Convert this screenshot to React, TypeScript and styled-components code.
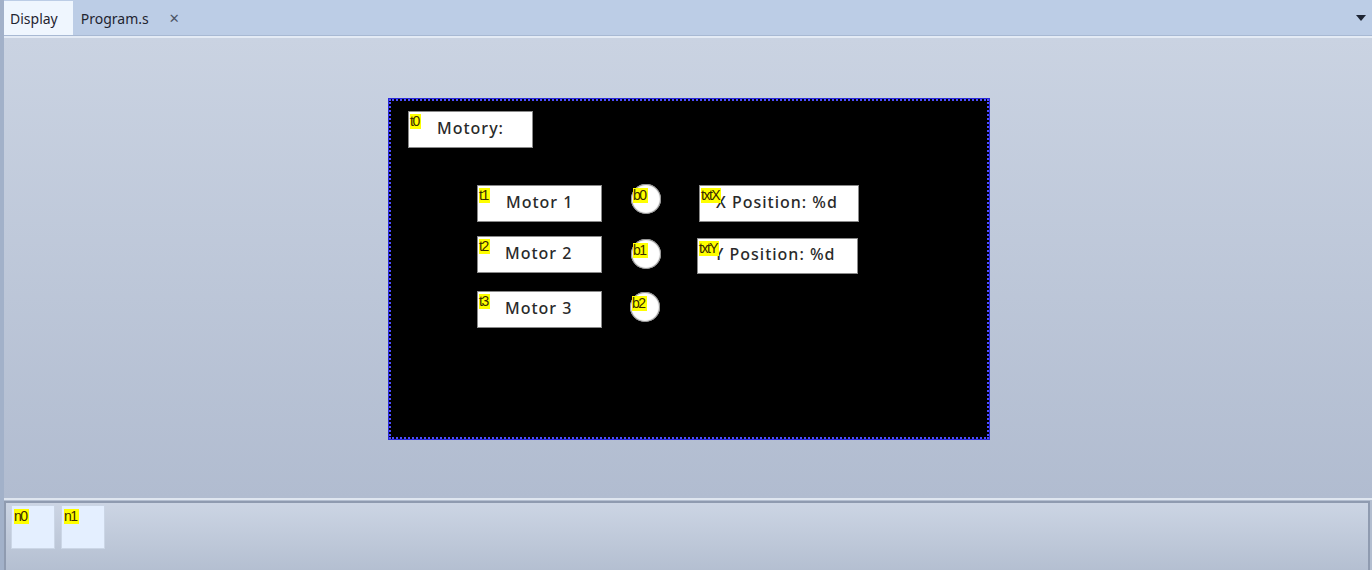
import React from "react";
import styled, { createGlobalStyle } from "styled-components";

const Global = createGlobalStyle`
  html, body { margin: 0; padding: 0; }
  body { width: 1372px; height: 570px; overflow: hidden; font-family: "Noto Sans", "DejaVu Sans", sans-serif; }
  #root { width: 1372px; height: 570px; }
`;

const Shell = styled.div`
  width: 1372px;
  height: 570px;
  display: flex;
  flex-direction: column;
  background: #c3cddd;
  border-left: 4px solid #a2b1c9;
  box-sizing: border-box;
`;

const TabBar = styled.div`
  height: 35px;
  flex: none;
  display: flex;
  align-items: flex-end;
  background: #bccde6;
  border-bottom: 1px solid #a8b9d3;
  position: relative;
`;

const Tab = styled.div<{ $active?: boolean }>`
  height: ${(p) => (p.$active ? "34px" : "33px")};
  display: flex;
  align-items: center;
  padding: ${(p) => (p.$active ? "0 15px 0 6px" : "0 8px")};
  box-sizing: border-box;
  font-family: "Noto Sans", sans-serif;
  font-size: 14px;
  color: #1f2430;
  background: ${(p) => (p.$active ? "#eff6fe" : "transparent")};
  gap: 20px;
`;

const CloseX = styled.span`
  font-size: 13px;
  color: #4d5566;
  font-family: "DejaVu Sans", sans-serif;
`;

const Dropdown = styled.div`
  position: absolute;
  right: 6px;
  top: 15px;
  width: 0;
  height: 0;
  border-left: 5px solid transparent;
  border-right: 5px solid transparent;
  border-top: 6px solid #1d2433;
`;

const Workspace = styled.div`
  flex: 1;
  border-top: 2px solid #e4ebf5;
  background: linear-gradient(#cad3e2, #b1bcd0);
  position: relative;
`;

const Canvas = styled.div`
  position: absolute;
  left: 385px;
  top: 61px;
  width: 600px;
  height: 340px;
  box-sizing: border-box;
  background: #000;
  border: 2px dotted #4c4cff;
  outline: 1px solid #2a2ad8;
`;

const Widget = styled.div`
  position: absolute;
  background: #fff;
  border: 1px solid #8a8a8a;
  box-sizing: border-box;
  display: flex;
  align-items: center;
  padding-bottom: 4px;
  font-family: "Noto Sans", "DejaVu Sans", sans-serif;
  font-weight: 500;
  font-size: 16px;
  letter-spacing: 1px;
  color: #2a2a2a;
`;

const Circle = styled.div`
  position: absolute;
  width: 30px;
  height: 30px;
  border-radius: 50%;
  background: #fff;
  box-shadow: 0 0 1px 1px #888 inset;
`;

const Tag = styled.span`
  position: absolute;
  left: 1px;
  top: 2px;
  background: #ffff00;
  color: #3a2a00;
  font-family: "Liberation Sans", sans-serif;
  font-size: 14px;
  line-height: 15px;
  letter-spacing: -1.5px;
  padding-right: 2px;
  z-index: 1;
  font-weight: 400;
`;

const Bottom = styled.div`
  height: 72px;
  flex: none;
  border-top: 2px solid #dfe6f0;
  background: #b3bed0;
  display: flex;
  box-sizing: border-box;
`;

const BottomInner = styled.div`
  flex: 1;
  margin: 1px 2px 0 0;
  border-top: 2px solid #8f9bb0;
  border-left: 2px solid #8f9bb0;
  border-right: 2px solid #8f9bb0;
  background: linear-gradient(#ccd5e4, #b4bfd1);
  display: flex;
  gap: 6px;
  padding: 2px 5px;
  box-sizing: border-box;
`;

const NumBox = styled.div`
  width: 44px;
  height: 44px;
  background: #e4efff;
  border: 1px solid #cbd6e6;
  box-sizing: border-box;
  position: relative;
`;

type W = { id: string; x: number; y: number; w: number; h: number; text: string; pad: number };

const widgets: W[] = [
  { id: "t0", x: 408, y: 110, w: 125, h: 37, text: "Motory:", pad: 28 },
  { id: "t1", x: 477, y: 184, w: 125, h: 37, text: "Motor 1", pad: 28 },
  { id: "t2", x: 477, y: 235, w: 125, h: 37, text: "Motor 2", pad: 27 },
  { id: "t3", x: 477, y: 290, w: 125, h: 37, text: "Motor 3", pad: 27 },
  { id: "txtX", x: 699, y: 184, w: 160, h: 37, text: "X Position: %d", pad: 16 },
  { id: "txtY", x: 697, y: 237, w: 161, h: 36, text: "Y Position: %d", pad: 16 },
];

const circles = [
  { id: "b0", x: 631, y: 183 },
  { id: "b1", x: 631, y: 238 },
  { id: "b2", x: 630, y: 291 },
];

const CX = 389;
const CY = 98;

export default function App() {
  return (
    <>
      <Global />
      <Shell>
        <TabBar>
          <Tab $active>Display</Tab>
          <Tab>
            Program.s<CloseX>✕</CloseX>
          </Tab>
          <Dropdown />
        </TabBar>
        <Workspace>
          <Canvas>
            {widgets.map((w) => (
              <Widget
                key={w.id}
                style={{ left: w.x - CX - 2, top: w.y - CY - 2, width: w.w, height: w.h, paddingLeft: w.pad }}
              >
                <Tag>{w.id}</Tag>
                {w.text}
              </Widget>
            ))}
            {circles.map((c) => (
              <Circle key={c.id} style={{ left: c.x - CX - 2, top: c.y - CY - 2 }}>
                <Tag style={{ left: 2, top: 4 }}>{c.id}</Tag>
              </Circle>
            ))}
          </Canvas>
        </Workspace>
        <Bottom>
          <BottomInner>
            <NumBox>
              <Tag style={{ left: 2, top: 3 }}>n0</Tag>
            </NumBox>
            <NumBox>
              <Tag style={{ left: 2, top: 3 }}>n1</Tag>
            </NumBox>
          </BottomInner>
        </Bottom>
      </Shell>
    </>
  );
}
